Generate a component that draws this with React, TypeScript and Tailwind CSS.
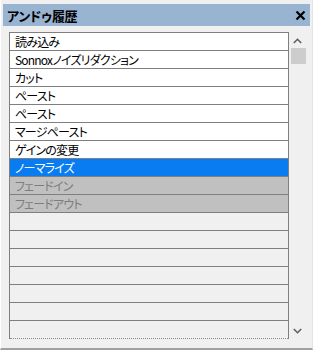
import React from "react";

type Item = { label: string; state: "normal" | "selected" | "disabled" };

const items: Item[] = [
  { label: "読み込み", state: "normal" },
  { label: "Sonnoxノイズリダクション", state: "normal" },
  { label: "カット", state: "normal" },
  { label: "ペースト", state: "normal" },
  { label: "ペースト", state: "normal" },
  { label: "マージペースト", state: "normal" },
  { label: "ゲインの変更", state: "normal" },
  { label: "ノーマライズ", state: "selected" },
  { label: "フェードイン", state: "disabled" },
  { label: "フェードアウト", state: "disabled" },
];

const TOTAL_ROWS = 17;

export default function App() {
  const rows = Array.from({ length: TOTAL_ROWS }, (_, i) => items[i]);
  return (
    <div
      className="w-[313px] h-[350px] bg-[#f0f0f0] border-l border-l-white border-r border-r-[#e3e3e3] border-b-2 border-b-[#a0a0a0] flex flex-col pt-[4px] px-[2px] [font-family:'Noto_Sans_CJK_JP','Noto_Sans',sans-serif] [font-feature-settings:'palt']"
    >
      <div className="h-[22px] bg-[#99b4d1] flex items-center justify-between pl-[4px] pr-[4px]">
        <span className="text-[13px] font-bold text-black leading-none tracking-[-0.3px]">
          アンドゥ履歴
        </span>
        <svg width="11" height="11" viewBox="0 0 11 11" className="mt-[1px]">
          <path d="M1.5 1.5 L9.5 9.5 M9.5 1.5 L1.5 9.5" stroke="#000" strokeWidth="2.2" />
        </svg>
      </div>
      <div className="flex mt-[6px] pl-[6px]">
        <div className="w-[280px] border-l border-r border-t border-[#7f7f7f]">
          {rows.map((it, i) => {
            const last = i === TOTAL_ROWS - 1;
            let cls = "bg-[#f0f0f0]";
            let tcls = "text-black";
            if (it?.state === "normal") cls = "bg-white";
            if (it?.state === "selected") {
              cls = "bg-[#0a7cf2]";
              tcls = "text-white";
            }
            if (it?.state === "disabled") {
              cls = "bg-[#c0c0c0]";
              tcls = "text-[#7d7d7d]";
            }
            return (
              <div
                key={i}
                className={`h-[18px] flex items-center pl-[5px] border-b ${
                  last ? "border-dotted border-[#8a8a8a]" : "border-[#7f7f7f]"
                } ${cls}`}
              >
                <span className={`text-[12px] leading-none tracking-[-0.8px] ${tcls}`}>
                  {it?.label ?? ""}
                </span>
              </div>
            );
          })}
        </div>
        <div className="w-[17px] flex flex-col items-center">
          <svg width="9" height="6" viewBox="0 0 9 6" className="mt-[6px]">
            <path d="M0.8 5 L4.5 1.3 L8.2 5" stroke="#606060" strokeWidth="1.6" fill="none" />
          </svg>
          <div className="mt-[4px] ml-[1px] w-[15px] h-[16px] bg-[#cdcdcd]" />
          <div className="flex-1" />
          <svg width="9" height="6" viewBox="0 0 9 6" className="mb-[5px]">
            <path d="M0.8 1 L4.5 4.7 L8.2 1" stroke="#606060" strokeWidth="1.6" fill="none" />
          </svg>
        </div>
      </div>
    </div>
  );
}
